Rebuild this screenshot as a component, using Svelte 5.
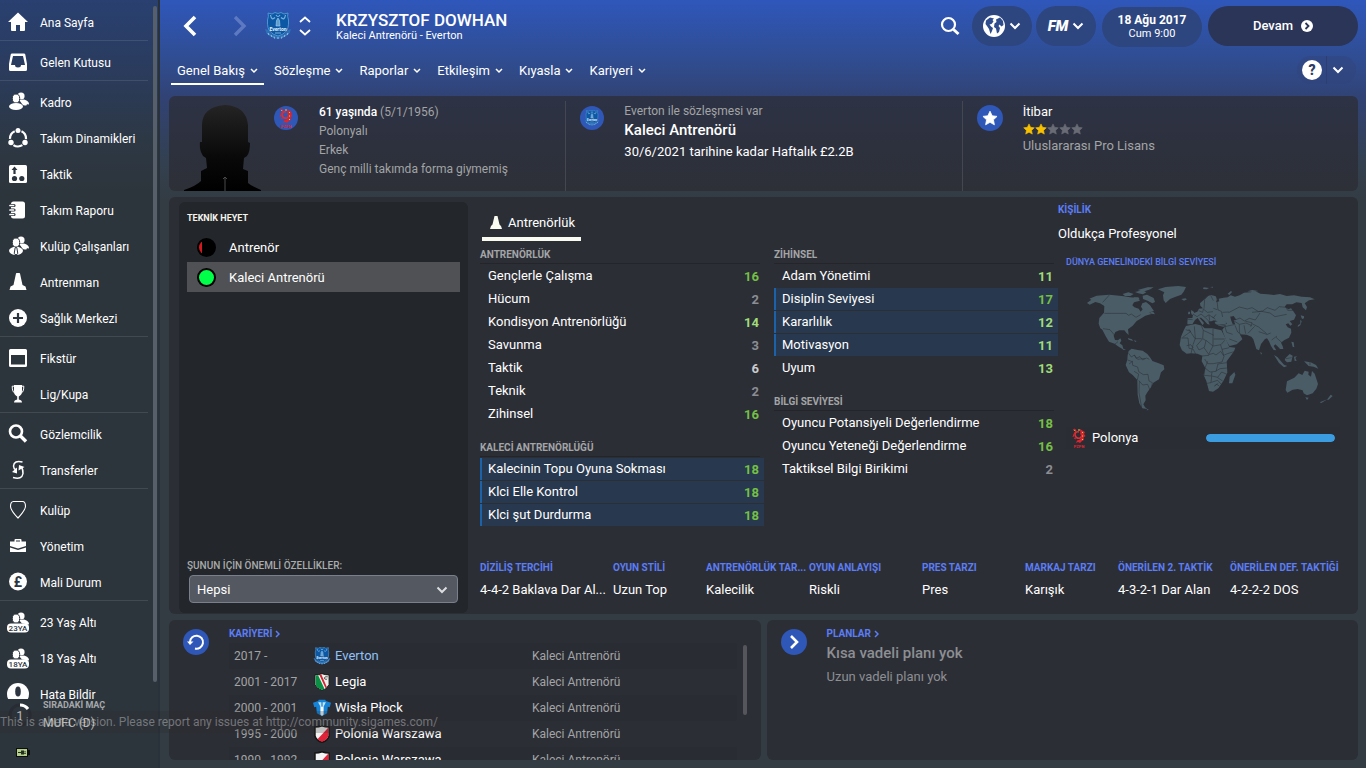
<script>
  const menu = [
    [['home', 'Ana Sayfa']],
    [['inbox', 'Gelen Kutusu']],
    [
      ['squad', 'Kadro'],
      ['dynamics', 'Takım Dinamikleri'],
      ['tactics', 'Taktik'],
      ['report', 'Takım Raporu'],
      ['staff', 'Kulüp Çalışanları'],
      ['cone', 'Antrenman'],
      ['medical', 'Sağlık Merkezi']
    ],
    [
      ['calendar', 'Fikstür'],
      ['cup', 'Lig/Kupa']
    ],
    [
      ['search', 'Gözlemcilik'],
      ['transfer', 'Transferler']
    ],
    [
      ['club', 'Kulüp'],
      ['board', 'Yönetim'],
      ['finance', 'Mali Durum']
    ],
    [
      ['u23', '23 Yaş Altı'],
      ['u18', '18 Yaş Altı'],
      ['bug', 'Hata Bildir']
    ]
  ];

  const tabs = ['Genel Bakış', 'Sözleşme', 'Raporlar', 'Etkileşim', 'Kıyasla', 'Kariyeri'];

  const columns = [
    [
      {
        title: 'ANTRENÖRLÜK',
        rows: [
          ['Gençlerle Çalışma', 16],
          ['Hücum', 2],
          ['Kondisyon Antrenörlüğü', 14],
          ['Savunma', 3],
          ['Taktik', 6],
          ['Teknik', 2],
          ['Zihinsel', 16]
        ]
      },
      {
        title: 'KALECİ ANTRENÖRLÜĞÜ',
        rows: [
          ['Kalecinin Topu Oyuna Sokması', 18, true],
          ['Klci Elle Kontrol', 18, true],
          ['Klci şut Durdurma', 18, true]
        ]
      }
    ],
    [
      {
        title: 'ZİHİNSEL',
        rows: [
          ['Adam Yönetimi', 11],
          ['Disiplin Seviyesi', 17, true],
          ['Kararlılık', 12, true],
          ['Motivasyon', 11, true],
          ['Uyum', 13]
        ]
      },
      {
        title: 'BİLGİ SEVİYESİ',
        rows: [
          ['Oyuncu Potansiyeli Değerlendirme', 18],
          ['Oyuncu Yeteneği Değerlendirme', 16],
          ['Taktiksel Bilgi Birikimi', 2]
        ]
      }
    ]
  ];

  const preferences = [
    ['DİZİLİŞ TERCİHİ', '4-4-2 Baklava Dar Al...'],
    ['OYUN STİLİ', 'Uzun Top'],
    ['ANTRENÖRLÜK TAR...', 'Kalecilik'],
    ['OYUN ANLAYIŞI', 'Riskli'],
    ['PRES TARZI', 'Pres'],
    ['MARKAJ TARZI', 'Karışık'],
    ['ÖNERİLEN 2. TAKTİK', '4-3-2-1 Dar Alan'],
    ['ÖNERİLEN DEF. TAKTİĞİ', '4-2-2-2 DOS']
  ];

  const career = [
    ['2017 -', 'everton', 'Everton'],
    ['2001 - 2017', 'legia', 'Legia'],
    ['2000 - 2001', 'wisla', 'Wisła Płock'],
    ['1995 - 2000', 'polonia', 'Polonia Warszawa'],
    ['1990 - 1992', 'polonia', 'Polonia Warszawa']
  ];

  const knowledge = 100;
  const grade = (n) => (n > 15 ? 'great' : n > 10 ? 'good' : n > 5 ? 'fair' : 'low');
</script>

{#snippet people()}
  <circle cx="14" cy="5" r="3.6" />
  <path d="M12 9l5-.6c4 1 5 3 5 5.200l-7-1z" />
  <ellipse cx="9" cy="7.500" rx="3.700" ry="4.500" stroke="#2d3640" stroke-width="1" />
{/snippet}

{#snippet icon(name)}
  <svg class="icon" viewBox="0 0 22 22" width="22" height="22" fill="#fff" aria-hidden="true">
    {#if name === 'home'}
      <path d="M11 1.500L21 11h-3v8q0 1-1 1h-4v-6H9v6H5q-1 0-1-1v-8H1z" />
    {:else if name === 'inbox'}
      <path fill-rule="evenodd" d="M5 2.500h12q1 0 1.300 1L20 13v5.500q0 1.500-1.500 1.500h-15Q2 20 2 18.500V13L3.700 3.500q.3-1 1.300-1zM6 5L4 14h4q0 2.500 3 2.500t3-2.500h4L16 5z" />
    {:else if name === 'squad'}
      {@render people()}
      <ellipse cx="9" cy="15.500" rx="7" ry="3.500" /><path d="M14 10q5 0 6 4-3 1.500-5-1z" />
    {:else if name === 'dynamics'}
      <circle cx="11" cy="11.500" r="8" fill="none" stroke="#fff" stroke-width="2.200" stroke-dasharray="9.500 7.250" stroke-dashoffset="-3.600" transform="rotate(-90 11 11.500)" />
      <circle cx="11" cy="3.500" r="2.500" /><circle cx="4" cy="15.500" r="2.700" /><circle cx="18" cy="15.500" r="2.700" />
    {:else if name === 'tactics'}
      <rect x="2" y="2" width="18" height="18" rx="1.500" />
      <g fill="#2d3640"><path d="M7.500 3.500l3 3.500H8.600v4H6.400V7H4.500z" /><circle cx="7.500" cy="15.500" r="2.600" /><circle cx="14.800" cy="15.500" r="2.600" /></g>
    {:else if name === 'report'}
      <rect x="4" y="2.500" width="14" height="17" rx="2.500" />
      <g stroke="#2d3640" stroke-width="3.200" stroke-linecap="round"><path d="M3 6.500h4M3 11h4M3 15.500h4" /></g>
      <g stroke="#fff" stroke-width="1.700" stroke-linecap="round"><path d="M3 6.500h3.500M3 11h3.500M3 15.500h3.500" /></g>
    {:else if name === 'staff'}
      {@render people()}
      <ellipse cx="9" cy="15.800" rx="7" ry="4" /><path d="M14 10q5 0 6 4-3 1.500-5-1z" />
      <path d="M8.200 12.500h1.600l1 6-1.800 1.500L7.200 18.500z" stroke="#2d3640" stroke-width="1" />
    {:else if name === 'cone'}
      <path d="M9 2.500Q9 2 9.700 2h2.600q.7 0 .7.500L15.500 14l3 1.500 1 3.500h-17l1-3.500L6.500 14z" />
    {:else if name === 'medical'}
      <circle cx="11" cy="11" r="9" /><path d="M11 6v10M6 11h10" stroke="#2d3640" stroke-width="2.200" />
    {:else if name === 'calendar'}
      <path fill-rule="evenodd" d="M3.500 2h15Q20 2 20 3.500v15q0 1.500-1.500 1.500h-15Q2 20 2 18.500v-15Q2 2 3.500 2zM4 8v9.500h14V8z" />
    {:else if name === 'cup'}
      <path d="M7 2h8v6q0 4-3.200 5.500v3Q15 17 15 19.500H7q0-2.500 3.200-3v-3Q7 12 7 8z" />
      <path d="M7 3.200H5.200q0 6 2.800 7M15 3.200h1.800q0 6-2.800 7" fill="none" stroke="#fff" stroke-width="1" />
    {:else if name === 'search'}
      <circle cx="9" cy="8.500" r="6" fill="none" stroke="#fff" stroke-width="2.600" /><path d="M13.500 13l5.500 5.500" stroke="#fff" stroke-width="3.400" />
    {:else if name === 'transfer'}
      <g fill="none" stroke="#fff" stroke-width="1.500"><path d="M15.500 3Q7 1 6.500 7q0 2.500 2.500 4" /><path d="M6 18.500q9 2.500 10-4 0-4-1.500-6.500" /></g>
      <path d="M10 8.500v6L5 13zM11.500 11.500l.5-5.500 5.500 2z" />
    {:else if name === 'club'}
      <path d="M6.500 2.500h9q3 0 3 5-.5 4-7.500 11.500Q4 12 3.500 7.500q0-5 3-5z" fill="none" stroke="#fff" stroke-width="1.100" />
    {:else if name === 'board'}
      <path fill-rule="evenodd" d="M7.500 6.500V5q0-1 1-1h5q1 0 1 1v1.500H19V11l-8 2.500L3 11V6.500zM9 6.500h4v-1H9zM3 12.500L11 15l8-2.500v4q0 .5-.5.500h-15Q3 17 3 16.500z" />
    {:else if name === 'finance'}
      <circle cx="11" cy="10.500" r="9" /><text x="11" y="15.500" text-anchor="middle" font-size="14" font-weight="700" fill="#2d3640">£</text>
    {:else if name === 'u23' || name === 'u18'}
      {@render people()}
      <rect x="0" y="12.500" width="22" height="9" rx="4" />
      <text x="11" y="20" text-anchor="middle" font-size="8" font-weight="500" fill="#2d3640">{name === 'u23' ? '23YA' : '18YA'}</text>
    {:else if name === 'bug'}
      <circle cx="11" cy="11" r="11" /><ellipse cx="11" cy="8.500" rx="2.800" ry="5" fill="#2d3640" /><circle cx="11" cy="18" r="2" fill="#2d3640" />
    {/if}
  </svg>
{/snippet}

{#snippet chevron()}
  <svg class="chevron" viewBox="0 0 8 6" width="8" height="6" aria-hidden="true"><path d="M1 1l3 3 3-3" fill="none" stroke="currentColor" stroke-width="1.500" /></svg>
{/snippet}

{#snippet bigChevron()}
  <svg viewBox="0 0 12 8" width="12" height="8" aria-hidden="true"><path d="M1.500 1.500L6 6l4.500-4.500" fill="none" stroke="currentColor" stroke-width="2" /></svg>
{/snippet}

{#snippet crest(name, size)}
  <svg class="crest" viewBox="0 0 28 28" width={size} height={size} aria-hidden="true">
    {#if name === 'everton'}
      <path d="M1 17q1 8 13 10 12-2 13-10l-3 1q-2 5-10 6-8-1-10-6z" fill="#2d72b8" />
      <path d="M4 21l1 2M7 23l1 2M10 24.500l.5 2M14 25v2M18 24.500l-.5 2M21 23l-1 2M24 21l-1 2" stroke="#9ec6e8" />
      <path d="M4 1l4 1 3-1.500 3 1 3-1L20 2l4-1q-1 3 .5 7 .5 9-3 12-3 3-7.500 4-4.500-1-7.500-4-3.500-3-3-12Q5 4 4 1z" fill="#0c58a5" stroke="#4c95d0" stroke-width="1" />
      <path d="M12 14l.5-5.500L14 6l1.500 2.500.5 5.500z" fill="#5fa0d3" stroke="#a9cfeb" stroke-width=".6" /><path d="M6.500 3q1 6 4.500 2.500M21.500 3q-1 6-4.500 2.500M12 3q2 3 4 0" fill="none" stroke="#78afdb" stroke-width="1.200" />
      <text x="14" y="18.500" text-anchor="middle" font-size="5" font-weight="700" fill="#e3f1fb">Everton</text>
      <path d="M11 21h6" stroke="#78afdb" />
    {:else if name === 'legia'}
      <path d="M3 3q6 0 11-2 5 2 11 2v15q-2 6-11 9Q5 24 3 18z" fill="#efefec" stroke="#151515" stroke-width="1.500" />
      <path d="M4 4l6-1 9 21-5 2.500Q5 23 4 18z" fill="#0b8f45" /><path d="M8 3.500h3l9 20-2 1.500z" fill="#f8f8f8" /><path d="M10 3l3-.8 8.500 19.500-2 2z" fill="#d52231" />
      <path d="M23 6q-6-1-5 3 3 2 4 0" fill="none" stroke="#222" stroke-width="1.200" />
    {:else if name === 'wisla'}
      <path d="M0 6l8-3 1-2h10l1 2 8 3-2 7-3-1-1 10-8 5-8-5-1-10-3 1z" fill="#1684d6" />
      <path d="M11.500 9h5v15L14 26.500 11.500 24z" fill="#f5fafe" /><path d="M8 5h12l-3 6h-6z" fill="#c7e4f7" /><path d="M13 2h2v10h-2z" fill="#1684d6" />
    {:else}
      <path d="M3 3q6 0 11-2 5 2 11 2v14q-2 7-11 10Q5 24 3 17z" fill="#f4f4f4" stroke="#161616" stroke-width="2.500" />
      <path d="M24 4v13q-2 6-10 9-4-1-7-4z" fill="#df2439" />
    {/if}
  </svg>
{/snippet}

{#snippet federation(width, height)}
  <svg viewBox="0 0 14 20" {width} {height} aria-hidden="true">
    <path d="M7 4q-4-1-4 3 1 4 5 3 3-2 1-5" fill="none" stroke="#de2e36" stroke-width="1.600" />
    <path d="M8 1l3 2 2 1-1 2 1.500 2-2 1.500.5 2.500-2 1-2 2-2-1-2 1 1-2.500 3-1 1.500-2-1-3.500z" fill="#d9262f" />
    <path d="M2 2l2 1M7 1v2M10 4l1 1M11 8h-1M10 11l1 1" stroke="#e8c247" stroke-width="1" />
    <path d="M1 2l2-1 1 2-2 3-1 3M2 10l2 1" stroke="#d9262f" stroke-width="1" fill="none" />
    <text x="7" y="19.500" text-anchor="middle" font-size="4" font-weight="900" fill="#d9262f">PZPN</text>
  </svg>
{/snippet}

{#snippet star(color, size)}
  <svg viewBox="0 0 20 20" width={size} height={size} aria-hidden="true"><path fill={color} stroke={color} stroke-linejoin="round" d="M10 1.500l2.700 5.700 6.100.8-4.500 4.300 1.200 6.200-5.500-3.100-5.500 3.100 1.200-6.200L1.200 8l6.100-.8z" /></svg>
{/snippet}

<div class="app" lang="tr">
  <aside>
    <nav class="menu" aria-label="Menü">
      {#each menu as group}
        <ul>
          {#each group as [name, label]}
            <li><a href="#{name}">{@render icon(name)}<span>{label}</span></a></li>
          {/each}
        </ul>
      {/each}
    </nav>
    <div class="side-scroll"></div>
    <div class="next">
      <svg viewBox="0 0 24 24" width="24" height="24" aria-hidden="true">
        <circle cx="12" cy="12" r="10" fill="none" stroke="#272c35" stroke-width="3" />
        <path d="M12 2q5 0 8 4" fill="none" stroke="#fff" stroke-width="3" />
        <text x="12" y="17" text-anchor="middle" font-size="13" fill="#ddd">1</text>
      </svg>
      <div><small>SIRADAKİ MAÇ</small><p>MUFC (D)</p></div>
    </div>
    <svg class="battery" viewBox="0 0 14 9" width="14" height="9" aria-hidden="true">
      <path d="M0 0h12v2h2v5h-2v2H0z" fill="#0d0f0e" /><path d="M1 1h10v7H1z" fill="#b5cf8a" /><path d="M2 4h3V2.500h3v1h2v.7H8v1h2v.7H8v.6H5V5H2z" fill="#23301f" />
    </svg>
  </aside>

  <main>
    <header>
      <div class="titlebar">
        <button class="plain back" aria-label="Geri"><svg viewBox="0 0 14 22" width="14" height="22"><path d="M12 2l-9 9 9 9" fill="none" stroke="#fff" stroke-width="3.600" /></svg></button>
        <button class="plain forward" aria-label="İleri"><svg viewBox="0 0 14 22" width="14" height="22"><path d="M2 2l9 9-9 9" fill="none" stroke="#5c79c2" stroke-width="3.400" /></svg></button>
        {@render crest('everton', 28)}
        <div class="spin">
          <button class="plain" aria-label="Önceki"><svg viewBox="0 0 12 7" width="12" height="7"><path d="M1 6l5-4.500L11 6" fill="none" stroke="#fff" stroke-width="1.800" /></svg></button>
          <button class="plain" aria-label="Sonraki"><svg viewBox="0 0 12 7" width="12" height="7"><path d="M1 1l5 4.500L11 1" fill="none" stroke="#fff" stroke-width="1.800" /></svg></button>
        </div>
        <div class="who">
          <h1>KRZYSZTOF DOWHAN</h1>
          <p>Kaleci Antrenörü - Everton</p>
        </div>
        <button class="plain find" aria-label="Ara"><svg viewBox="0 0 20 20" width="20" height="20"><circle cx="8.500" cy="8.500" r="6.500" fill="none" stroke="#fff" stroke-width="2.200" /><path d="M13.500 13.500l5 4.500" stroke="#fff" stroke-width="3" /></svg></button>
        <button class="pill" aria-label="Dünya">
          <svg viewBox="0 0 22 22" width="22" height="22"><circle cx="11" cy="11" r="11" fill="#fff" /><path d="M3 5.500l4-3 4 1-1.500 1.500 1 1.500-2 2.500-2 .5 1.500 2 2 1.500-1 3-1.500 3-1.500-5-2-3-1.500-2zM13 4.500l4-2 3 3.500.5 4-2 1.500-2-2-1 1.500 1.500 2-1 4-2 1.500-1-5-2-1.500.5-3.500 2-1.500z" fill="#2f4c8c" /></svg>
          {@render bigChevron()}
        </button>
        <button class="pill"><b class="fm">FM</b>{@render bigChevron()}</button>
        <button class="pill date"><b>18 Ağu 2017</b><span>Cum 9:00</span></button>
        <button class="pill go">Devam <svg viewBox="0 0 12 12" width="12" height="12"><circle cx="6" cy="6" r="6" fill="#fff" /><path d="M4.500 3l3 3-3 3" fill="none" stroke="#2c3556" stroke-width="1.800" /></svg></button>
      </div>
      <div class="tabbar">
        <nav class="tabs" aria-label="Bölümler">
          {#each tabs as tab, i}
            <a href="#tab{i}" class:active={i === 0}>{tab}{@render chevron()}</a>
          {/each}
        </nav>
        <div class="help">
          <button class="plain q" aria-label="Yardım">?</button>
          <button class="plain more" aria-label="Yardım menüsü">{@render bigChevron()}</button>
        </div>
      </div>
    </header>

    <section class="panel facts">
      <div class="fact person">
        <svg class="portrait" viewBox="0 0 78 86" width="78" height="86" aria-hidden="true">
          <defs><linearGradient id="shade" x1="0" y1="0" x2="0" y2="1"><stop offset="0" stop-color="#242424" /><stop offset=".6" stop-color="#090909" /><stop offset="1" stop-color="#000" /></linearGradient></defs>
          <path fill="url(#shade)" d="M41 0Q62 1 64 20v17l2 1q0 9-3 13l-3 2-1 11 5 2v12q2 2 13 7v1H0v-1q12-4 17-9V66l6-3-1-10-3-2q-4-6-3-14h2V22Q17 2 41 0z" />
          <path d="M41 86V72l-2 2M41 72l2 2" fill="none" stroke="#4a4a4a" />
        </svg>
        <div class="disc">{@render federation(14, 20)}</div>
        <div class="lines">
          <p class="age"><b>61 yaşında</b> (5/1/1956)</p>
          <p class="mini">Polonyalı</p>
          <p class="mini">Erkek</p>
          <p class="mini">Genç milli takımda forma giymemiş</p>
        </div>
      </div>
      <div class="fact">
        <div class="disc">{@render crest('everton', 16)}</div>
        <div class="lines job">
          <p class="mini">Everton ile sözleşmesi var</p>
          <h2>Kaleci Antrenörü</h2>
          <p class="white">30/6/2021 tarihine kadar Haftalık £2.2B</p>
        </div>
      </div>
      <div class="fact">
        <div class="disc large">{@render star('#fff', 16)}</div>
        <div class="lines">
          <p class="white">İtibar</p>
          <div class="stars" role="img" aria-label="2 / 5">
            {#each [1, 2, 3, 4, 5] as n}{@render star(n < 3 ? '#f7c100' : '#696c75', 12)}{/each}
          </div>
          <p>Uluslararası Pro Lisans</p>
        </div>
      </div>
    </section>

    <section class="panel detail">
      <div class="team">
        <h3>TEKNİK HEYET</h3>
        <button class="role"><i class="dot red"></i>Antrenör</button>
        <button class="role chosen"><i class="dot green"></i>Kaleci Antrenörü</button>
        <label for="filter">ŞUNUN İÇİN ÖNEMLİ ÖZELLİKLER:</label>
        <div class="select">
          <select id="filter"><option>Hepsi</option></select>
          <span>{@render bigChevron()}</span>
        </div>
      </div>

      <div class="body">
        <div class="attrs">
          <div class="pair">
            <a class="subtab" href="#coaching"><svg viewBox="0 0 12 13" width="12" height="13" aria-hidden="true"><path d="M4.500 0h3l2 8.500L11 10l1 3H0l1-3 1.500-1.500z" fill="#fafbf0" /></svg>Antrenörlük</a>
            {#each columns as column}
              <div>
                {#each column as block}
                  <section class="block">
                    <h4>{block.title}</h4>
                    <dl>
                      {#each block.rows as [label, value, key]}
                        <div class:key><dt>{label}</dt><dd class={grade(value)}>{value}</dd></div>
                      {/each}
                    </dl>
                  </section>
                {/each}
              </div>
            {/each}
          </div>
          <div class="traits">
            <h5>KİŞİLİK</h5>
            <p>Oldukça Profesyonel</p>
            <h5 class="world">DÜNYA GENELİNDEKİ BİLGİ SEVİYESİ</h5>
            <svg class="map" viewBox="0 0 780 408" aria-hidden="true">
              <g fill="#4a5d67">
                <path d="M21 75L34 65 28 62 50 53 88 50 132 55 150 58 172 60 180 68 162 73 157 82 163 88 176 92 182 101 188 94 183 86 187 76 198 72 210 82 217 92 222 99 208 103 214 108 196 113 184 121 170 129 158 143 144 154 146 171 139 164 133 157 118 157 106 162 101 173 105 186 114 187 121 181 124 188 119 196 127 202 130 212 138 216 131 216 123 210 116 206 104 197 87 191 78 176 67 155 61 151 56 137 58 120 72 104 73 84 60 76 46 72 29 80z" />
                <path d="M128 48L145 43 161 48 151 54 135 54zM165 42l22-5 12 6-10 6-14-3zM188 53l13-3 20 10 4 12-8 4-14-8-14-5zM173 36l30-8 18 0-10 6-22 7zM160 58l15 0 4 6-10 3zM208 100l12 2 5 7-11-2z" />
                <path d="M234 34L257 27 295 24 318 27 311 41 304 50 287 56 270 63 257 75 251 67 249 52 253 43z" />
                <path d="M304 63l12-2 5 3-9 4zM334 96l7 5 3 7-8 3-3-7zM325 101l5 0 0 7-6 1zM143 180l13 4 3 5-13-4zM161 187l9 2-4 3zM199 397l7-1-3-3z" />
                <path d="M322 139L323 121 337 120 340 106 352 101 357 92 369 91 361 83 360 76 370 67 382 55 393 51 407 55 412 64 408 73 418 70 416 62 431 59 443 58 452 52 465 56 479 52 492 44 512 43 525 39 541 47 562 49 581 51 600 48 620 54 642 52 665 56 690 58 704 64 687 67 674 76 681 87 678 97 668 88 665 75 649 73 637 79 620 79 614 86 625 94 633 91 640 100 648 112 642 125 629 129 637 139 631 143 625 136 617 139 623 148 633 152 634 164 627 179 612 187 603 194 608 205 610 213 600 213 594 206 586 199 581 204 589 217 581 216 573 204 567 190 561 181 555 183 543 198 537 217 529 213 520 184 514 176 500 170 479 169 484 177 487 184 470 199 449 204 441 193 430 166 427 155 433 147 417 143 407 138 402 127 394 130 385 130 389 140 382 138 371 126 363 119 358 119 372 135 368 142 353 120 345 126 337 139z" />
                <path d="M318 144L346 138 366 143 374 151 397 151 424 157 435 178 448 207 466 209 462 220 440 250 442 284 430 309 415 331 399 341 387 339 379 309 371 291 376 270 365 250 367 233 352 227 334 226 320 227 306 217 299 201 303 176 312 155z" />
                <path d="M463 282l3 8-9 26-10 0 2-20z" />
                <path d="M146 219L155 212 173 216 188 218 202 228 211 239 217 249 234 255 251 262 253 274 243 283 237 304 220 314 213 328 202 343 196 353 197 367 190 379 195 388 202 393 187 391 178 376 173 350 172 306 158 291 147 283 137 261 142 245 143 232z" />
                <path d="M621 310L643 299 656 286 667 291 674 278 686 281 685 290 693 296 696 279 704 287 714 318 709 332 698 346 681 352 671 346 668 337 653 333 638 335 622 344 617 336z" />
                <path d="M676 358l10 1-5 7zM752 350l6 4-12 11-5 0zM742 364l-18 11-5-2zM582 231l10 6 20 23 10 4-10 4-15-13zM617 240l12-12 9 5-4 18-13 2-7-7zM642 236l9-1-5 5 4 8-6 1zM672 250l20 3 16 8 7 11-14-6-15-2-8-8zM634 191l7 2 2 15-5-2zM665 130l-4 12-8 5 1-5 7-5 0-12zM662 112l10 3 0 6-6 2zM541 221l5 5-3 4zM443 47l10-8 3 3-8 9zM502 40l15-4 18 3-17 3zM371 28l16 2-7 4-11-1zM390 27l9-1 0 3z" />
              </g>
              <g fill="none" stroke="#2c2f37" stroke-width="1.700" stroke-linejoin="round">
                <path d="M88 51L68 73M73 106l65 0 8 6 8-4 14 10 14-8M69 152l21 3 14 17M104 199l10-8M146 226l8 11 9-6 5 10 12-5 8 10 12-6 8 4M143 246l14 5 1 11 15 5 3 14 14 9 14-1 3 20 10 5-2 12M163 231l10 13 23-3M147 258l12-9M172 306l4-18-14-8M176 307l12 14 15-2 8 20M178 310l-1 34 8 45" />
                <path d="M326 153l19 29 20 0M343 145l3 36-7 19M317 155l16 5-25 18M304 180l20 0 3 31 12 2 9 17M364 143l6 14-2 24M399 152l0 52M370 157l32 15M401 183l33 0M350 203l18-21 10 6-5 20-16 8zM378 187l21 17-13 25-14-20M400 204l23-4 11-13M422 201l4 13 22-5M426 214l5 18 11-5 20-6M386 230l14-4 8 5 14-11 10 15-6 17-26 5-17 0-9-14M365 234l22-2M383 250l-8 20 15 12 18-2 6-22M375 271l-3 21 22 2 2-12M408 279l12-7 21-2M413 258l27-4M395 294l-2 20-12 2M396 294l17 4 12-16 16 7M394 313l19-6 11 12M413 299l15 10M402 325l8-6 8 5M339 201l-6 26M320 203l12-3 8 10" />
                <path d="M322 124l16 1M339 108l12 8 12-8 12 10 12-8 13 10 8-11M356 98l12 5 2-10 12 10 17-2M372 92l2-28 10-10M392 52l8 16M410 58l4 38 10 4 4 17M400 91l12 4M387 111l2 17M376 119l10 10M427 103l20-1M406 124l-9-8M446 104l32-17 24 6 14-4 20 12 12-2 14-10 23 8 13-11 20 2 5 9 21 0M516 103l28-3 26 5 15 11 35-7M452 117l13 9 15-6 13 9 15-8 18 5 14-21M461 128l17 11 20-4 17 8M496 130l20 4-4 12M478 140l0 26M427 148l20-5 15-3M434 143l6 20 18 6M465 142l8 20 10 7M492 142l5 25M516 137l20 10 24 20M504 166l20-21M536 161l24 8M560 170l12-5M575 186l16-12M588 178l20 18M448 183l24 9M417 140l21 3" />
                <path d="M690 252l0 10M618 242l17-3M406 322l9-6" />
              </g>
              <path d="M397 139l7-12 14 5 19-1 4 7-20 3-14-3zM451 116l10-2 8 11-8 2 5 13-8-2-5-12z" fill="#2c2f37" />
              <path d="M404 132l13-4 20 2 2 7-21 3-12-3z" fill="#4a5d67" />
            </svg>
            <div class="nation">
              {@render federation(14, 20)}
              <span>Polonya</span>
              <div class="track"><div class="fill" style="width: {knowledge}%"></div></div>
            </div>
          </div>
        </div>

        <dl class="prefs">
          {#each preferences as [label, value]}
            <div><dt>{label}</dt><dd>{value}</dd></div>
          {/each}
        </dl>
      </div>
    </section>

    <div class="bottom">
      <section class="panel card">
        <div class="disc large"><svg viewBox="0 0 18 18" width="18" height="18" aria-hidden="true"><path d="M3 9a6.500 6.500 0 1 1 5 6.500" fill="none" stroke="#fff" stroke-width="2" /><path d="M0 8.500h6.500L3 12z" fill="#fff" /></svg></div>
        <div class="history">
          <h5><a href="#career">KARİYERİ <svg viewBox="0 0 5 8" width="5" height="8" aria-hidden="true"><path d="M1 1l3 3-3 3" fill="none" stroke="currentColor" stroke-width="1.500" /></svg></a></h5>
          <div class="scroller">
            <table>
              <tbody>
                {#each career as [years, badge, club], i}
                  <tr>
                    <td class="years">{years}</td>
                    <td class="club" class:own={i === 0}><div>{@render crest(badge, 18)}{club}</div></td>
                    <td>Kaleci Antrenörü</td>
                  </tr>
                {/each}
              </tbody>
            </table>
            <div class="bar"></div>
          </div>
        </div>
      </section>
      <section class="panel card">
        <div class="disc large"><svg viewBox="0 0 10 16" width="10" height="16" aria-hidden="true"><path d="M2 2l6 6-6 6" fill="none" stroke="#fff" stroke-width="2.600" /></svg></div>
        <div class="plans">
          <h5><a href="#plans">PLANLAR <svg viewBox="0 0 5 8" width="5" height="8" aria-hidden="true"><path d="M1 1l3 3-3 3" fill="none" stroke="currentColor" stroke-width="1.500" /></svg></a></h5>
          <h2>Kısa vadeli planı yok</h2>
          <p>Uzun vadeli planı yok</p>
        </div>
      </section>
    </div>
  </main>

  <div class="beta">This is a beta version. Please report any issues at http://community.sigames.com/</div>
</div>

<style>
  :global(body) { margin: 0; background: #333c43; }
  .app {
    position: relative; display: flex; height: 100vh; min-height: 700px; overflow: hidden;
    font: 13px/18px Roboto, "Liberation Sans", sans-serif; color: #fff;
    background: linear-gradient(#2f57bb 0, #304c8e 64px, #314273 100px, #33404f 165px, #333c43 200px);
  }
  .app :is(h1, h2, h3, h4, h5, p, ul, dl, dd) { margin: 0; padding: 0; }
  .app svg { display: block; flex: none; }
  a { color: inherit; text-decoration: none; }
  button { font: inherit; color: inherit; border: 0; cursor: pointer; }
  .plain { background: none; padding: 0; display: block; }

  aside {
    position: relative; flex: none; width: 158px; border-right: 2px solid #29313a; display: flex; flex-direction: column;
    background: linear-gradient(#294070 0, #2a3c60 60px, #2d3845 140px, #2d353c 190px, #2d353c);
  }
  .menu { flex: 1; min-height: 0; overflow: hidden; padding-top: 4px; }
  ul { list-style: none; }
  .menu ul { border-bottom: 1px solid #ffffff1a; }
  .app .menu ul { margin: 0 10px 3px 0; }
  .menu a { display: flex; align-items: center; gap: 11px; height: 36px; padding-left: 7px; font-size: 12px; }
  .menu span { padding-top: 2px; }
  .side-scroll { position: absolute; left: 153px; top: 6px; bottom: 86px; width: 4px; border-radius: 2px; background: #565f6a; }
  .next { display: flex; height: 46px; padding-left: 8px; gap: 11px; overflow: hidden; }
  .next > svg { margin-top: 4px; }
  small { display: block; font: 700 9px/12px Roboto, sans-serif; color: #a6a9ac; white-space: nowrap; }
  .next p { font-size: 12px; line-height: 24px; color: #e4e4e4; }
  .battery { margin: 3px 0 11px 16px; }

  main { flex: 1; min-width: 0; display: flex; flex-direction: column; gap: 6px; padding: 0 8px 8px 9px; }
  header { height: 90px; }
  .titlebar { display: flex; align-items: center; height: 52px; }
  .back { margin-left: 14px; }
  .forward { margin: 0 17px 0 36px; }
  .spin { display: grid; gap: 6px; margin: 0 25px 0 7px; }
  .who { flex: 1; padding-top: 2px; }
  h1 { font-size: 17px; line-height: 18px; font-weight: 500; }
  .who p { font-size: 11px; line-height: 14px; }
  .find { margin-right: 12px; }
  .pill { display: flex; align-items: center; justify-content: center; gap: 4px; width: 60px; height: 40px; padding: 0; border-radius: 20px; background: #2e467f; margin-right: 4px; }
  .fm { font: italic 900 15px/18px Roboto, sans-serif; }
  .date { box-sizing: border-box; width: 100px; flex-direction: column; gap: 0; font-size: 11px; line-height: 14px; margin: 2px 6px 0 2px; }
  .date b { font-weight: 700; font-size: 12px; }
  .go { width: 150px; gap: 8px; background: #2b3557; font-weight: 500; margin: 0; }
  .tabbar { display: flex; justify-content: space-between; align-items: center; height: 36px; padding-right: 2px; }
  .tabs { display: flex; gap: 4px; padding-left: 2px; }
  .tabs a { display: flex; align-items: center; gap: 5px; height: 24px; padding: 4px 6px 0; border-bottom: 2px solid transparent; }
  .tabs .active { border-color: #fff; }
  .help { display: flex; align-items: center; gap: 4px; height: 28px; padding: 0 12px 0 5px; border-radius: 14px; background: #30447b80; }
  .q { width: 20px; height: 20px; border-radius: 10px; background: #fff; color: #2c3c69; font-weight: 900; font-size: 14px; }
  .more { align-self: stretch; padding-left: 5px; border-left: 1px solid #2c3f70; }

  .panel { border-radius: 6px; background: #2c2e36; }
  .facts { display: grid; grid-template-columns: repeat(3, 1fr); height: 95px; background: linear-gradient(#2d3245, #2d3037); color: #a2a4a5; }
  .fact { display: flex; padding: 5px 0 0 15px; gap: 21px; }
  .fact + .fact { margin-top: 5px; padding: 0 0 0 14px; border-left: 1px solid #44474f; gap: 20px; }
  .portrait { align-self: flex-end; margin-right: -9px; }
  .disc { flex: none; width: 24px; height: 24px; border-radius: 50%; background: #2f57b7; display: grid; place-items: center; margin-top: 5px; }
  .large { width: 26px; height: 26px; margin-top: 4px; }
  .lines { line-height: 20px; padding-top: 1px; }
  .person p + p { line-height: 19px; }
  .lines b { font-weight: 500; color: #fff; }
  .mini, .age { font-size: 12px; }
  .white { color: #fff; }
  .job h2 { color: #fff; font-size: 15px; line-height: 20px; font-weight: 500; }
  .job .mini { line-height: 18px; }
  .job .white { line-height: 24px; }
  .stars { display: flex; height: 14px; align-items: center; }

  .detail { flex: 1; min-height: 0; display: flex; gap: 12px; padding: 5px 10px 1px; }
  .team { flex: none; width: 273px; padding: 8px; border-radius: 6px; background: #23262a; display: flex; flex-direction: column; }
  h3 { font-size: 9px; line-height: 16px; font-weight: 700; color: #f4f4ea; }
  .app .team h3 { margin-bottom: 6px; }
  .role { display: flex; align-items: center; gap: 13px; height: 30px; padding: 1px 10px 0; background: none; text-align: left; }
  .chosen { background: #505154; }
  .dot { box-sizing: border-box; width: 19px; height: 19px; border-radius: 50%; border: 2px solid #000; }
  .green { background: #00ff48; }
  .red { background: linear-gradient(90deg, #d3191d 3px, #000 3px); }
  .team label { margin-top: auto; font-size: 10px; line-height: 16px; font-weight: 500; color: #a9abac; }
  .select { position: relative; margin: 1px 2px 2px; }
  select { appearance: none; display: block; width: 100%; height: 28px; border: 1px solid #7a7f8c; border-radius: 4px; background: #535861; color: #fff; font: inherit; padding: 1px 7px 0; }
  .select span { position: absolute; right: 10px; top: 11px; pointer-events: none; color: #dcdde0; }

  .body { flex: 1; min-width: 0; display: flex; flex-direction: column; }
  .attrs { flex: 1; display: grid; grid-template-columns: 578fr 290fr; }
  .pair { display: grid; grid-template-columns: 1fr 1fr; column-gap: 10px; grid-template-rows: 44px auto; }
  .subtab { grid-column: 1 / -1; justify-self: start; display: flex; align-items: center; gap: 6px; box-sizing: border-box; height: 39px; margin-left: 2px; padding: 6px 6px 0 8px; border-bottom: 4px solid #fafbf0; }
  .app .block { margin-bottom: 14px; }
  h4 { font-size: 10px; line-height: 17px; font-weight: 700; color: #a3a5a6; border-bottom: 1px solid #23252b; }
  .app .block h4 { margin: 0 4px 1px 0; }
  .block dl div { display: flex; justify-content: space-between; height: 22px; line-height: 22px; margin-bottom: 1px; padding: 0 5px 0 8px; }
  .block dl .key { background: #28384e; box-shadow: inset 2px 0 #1c62a8; }
  .block dd { line-height: 24px; font-weight: 700; }
  .great { color: #74bf45; }
  .good { color: #a0dc78; }
  .fair { color: #c9cacc; }
  .low { color: #8b8d92; }
  h5 { font-size: 10px; line-height: 16px; font-weight: 700; color: #5b7df5; }
  .traits p { line-height: 32px; }
  .app .traits .world { margin: 4px 0 8px 8px; font-size: 9px; font-weight: 500; }
  .map { width: 260px; max-width: 100%; margin-left: 22px; }
  .nation { display: flex; align-items: center; height: 22px; margin: 13px 8px 0 8px; padding: 0 5px 0 6px; gap: 6px; background: #2a2d34; }
  .track { margin-left: auto; width: 129px; height: 8px; border-radius: 4px; background: #24272c; overflow: hidden; }
  .fill { height: 100%; background: #3b9ddf; border-radius: 4px; }
  .app .prefs { display: grid; grid-template-columns: 133fr 93fr 103fr 113fr 103fr 93fr 112fr 118fr; padding-bottom: 10px; }
  .prefs div { min-width: 0; }
  .prefs dt { font-size: 10px; line-height: 18px; font-weight: 700; color: #5b7df5; white-space: nowrap; }
  .prefs dd { line-height: 26px; white-space: nowrap; }

  .bottom { display: grid; grid-template-columns: 1fr 1fr; gap: 6px; height: 140px; }
  .card { display: flex; gap: 20px; padding: 5px 14px 0; overflow: hidden; }
  .card h5 { line-height: 18px; }
  .card h5 a { display: flex; align-items: center; gap: 3px; }
  .history { flex: 1; }
  .scroller { display: flex; align-items: flex-start; gap: 6px; }
  table { flex: 1; border-collapse: collapse; table-layout: fixed; color: #a2a4a5; }
  td { height: 26px; padding: 0; font-size: 12px; }
  td:first-child { padding-left: 5px; }
  tr:nth-child(odd) { background: #2a2c33; }
  .years { width: 79px; }
  .club { width: 219px; color: #fff; font-size: 13px; }
  .club div { display: flex; align-items: center; gap: 4px; }
  .own { color: #8fc1f7; }
  .bar { width: 4px; height: 70px; margin-top: 2px; border-radius: 2px; background: #54565c; }
  .plans { color: #8d8f93; }
  .plans h2 { font-size: 15px; line-height: 20px; font-weight: 500; }
  .plans p { font-size: 13px; line-height: 28px; }

  .beta { position: absolute; left: 0; bottom: 35px; height: 22px; line-height: 22px; padding-right: 2px; font-size: 12px; color: #ffffff58; background: #2a2b2c40; pointer-events: none; white-space: nowrap; }
</style>
